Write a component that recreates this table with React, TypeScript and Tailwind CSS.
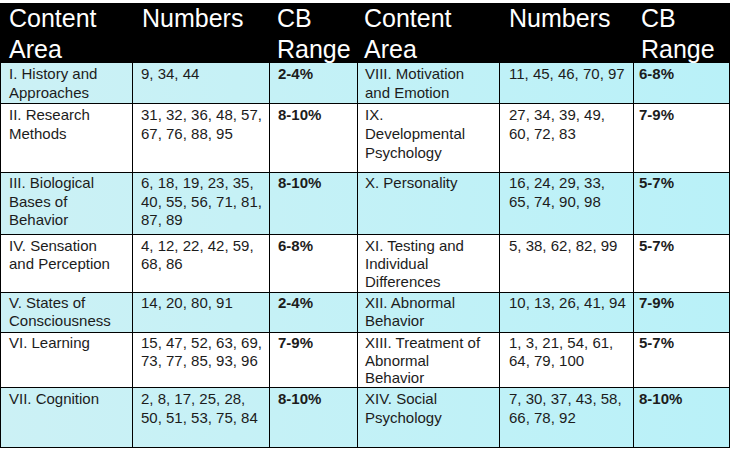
import React from 'react';

type Row = {
    area1: string[];
    nums1: string[];
    range1: string;
    area2: string[];
    nums2: string[];
    range2: string;
    h: string;
    lead: string;
    cyan: boolean;
};

const rows: Row[] = [
    { area1: ['I. History and', 'Approaches'], nums1: ['9, 34, 44'], range1: '2-4%', area2: ['VIII. Motivation', 'and Emotion'], nums2: ['11, 45, 46, 70, 97'], range2: '6-8%', h: 'h-[41px]', lead: 'leading-[19px] pt-[1px]', cyan: true },
    { area1: ['II. Research', 'Methods'], nums1: ['31, 32, 36, 48, 57,', '67, 76, 88, 95'], range1: '8-10%', area2: ['IX.', 'Developmental', 'Psychology'], nums2: ['27, 34, 39, 49,', '60, 72, 83'], range2: '7-9%', h: 'h-[69px]', lead: 'leading-[19px] pt-[1px]', cyan: false },
    { area1: ['III. Biological', 'Bases of', 'Behavior'], nums1: ['6, 18, 19, 23, 35,', '40, 55, 56, 71, 81,', '87, 89'], range1: '8-10%', area2: ['X. Personality'], nums2: ['16, 24, 29, 33,', '65, 74, 90, 98'], range2: '5-7%', h: 'h-[62px]', lead: 'leading-[18.5px] pt-[1px]', cyan: true },
    { area1: ['IV. Sensation', 'and Perception'], nums1: ['4, 12, 22, 42, 59,', '68, 86'], range1: '6-8%', area2: ['XI. Testing and', 'Individual', 'Differences'], nums2: ['5, 38, 62, 82, 99'], range2: '5-7%', h: 'h-[58px]', lead: 'leading-[18px] pt-[2px]', cyan: false },
    { area1: ['V. States of', 'Consciousness'], nums1: ['14, 20, 80, 91'], range1: '2-4%', area2: ['XII. Abnormal', 'Behavior'], nums2: ['10, 13, 26, 41, 94'], range2: '7-9%', h: 'h-[40px]', lead: 'leading-[18px] pt-[1px]', cyan: true },
    { area1: ['VI. Learning'], nums1: ['15, 47, 52, 63, 69,', '73, 77, 85, 93, 96'], range1: '7-9%', area2: ['XIII. Treatment of', 'Abnormal', 'Behavior'], nums2: ['1, 3, 21, 54, 61,', '64, 79, 100'], range2: '5-7%', h: 'h-[55px]', lead: 'leading-[17.5px] pt-[1px]', cyan: false },
    { area1: ['VII. Cognition'], nums1: ['2, 8, 17, 25, 28,', '50, 51, 53, 75, 84'], range1: '8-10%', area2: ['XIV. Social', 'Psychology'], nums2: ['7, 30, 37, 43, 58,', '66, 78, 92'], range2: '8-10%', h: 'h-[60px]', lead: 'leading-[18.5px] pt-[2px]', cyan: true },
];

function Lines({ lines }: { lines: string[] }) {
    return (
        <>
            {lines.map((l, i) => (
                <div key={i} className="whitespace-nowrap">{l}</div>
            ))}
        </>
    );
}

export default function App() {
    return (
        <div className="w-[733px] h-[449px] bg-white overflow-hidden font-['Liberation_Sans',Arial,sans-serif] text-[#1c1c1c]">
            <div className="w-[730px] pt-[3px]">
                {/* Header */}
                <div className="flex h-[60px] bg-black text-white text-[25px] leading-[31px]">
                    <div className="w-[133px] pl-[9px]">Content<br />Area</div>
                    <div className="w-[137px] pl-[9px]">Numbers</div>
                    <div className="w-[88px] pl-[7px]">CB<br />Range</div>
                    <div className="w-[142px] pl-[6px]">Content<br />Area</div>
                    <div className="w-[134px] pl-[9px]">Numbers</div>
                    <div className="w-[96px] pl-[7px]">CB<br />Range</div>
                </div>

                {/* Body */}
                {rows.map((r, i) => (
                    <div
                        key={i}
                        className={`flex ${r.h} border-b border-black text-[15px] ${r.cyan ? 'bg-gradient-to-r from-[#ccf1f5] to-[#b9f1f8]' : 'bg-white'}`}
                    >
                        <div className={`w-[133px] shrink-0 border-l border-r border-black pl-[8px] ${r.lead}`}><Lines lines={r.area1} /></div>
                        <div className={`w-[137px] shrink-0 border-r border-black pl-[8px] ${r.lead}`}><Lines lines={r.nums1} /></div>
                        <div className={`w-[88px] shrink-0 border-r border-black pl-[8px] font-bold ${r.lead}`}>{r.range1}</div>
                        <div className={`w-[142px] shrink-0 border-r border-black pl-[7px] ${r.lead}`}><Lines lines={r.area2} /></div>
                        <div className={`w-[134px] shrink-0 border-r border-black pl-[9px] ${r.lead}`}><Lines lines={r.nums2} /></div>
                        <div className={`w-[96px] shrink-0 border-r border-black pl-[5px] font-bold ${r.lead}`}>{r.range2}</div>
                    </div>
                ))}
            </div>
        </div>
    );
}
